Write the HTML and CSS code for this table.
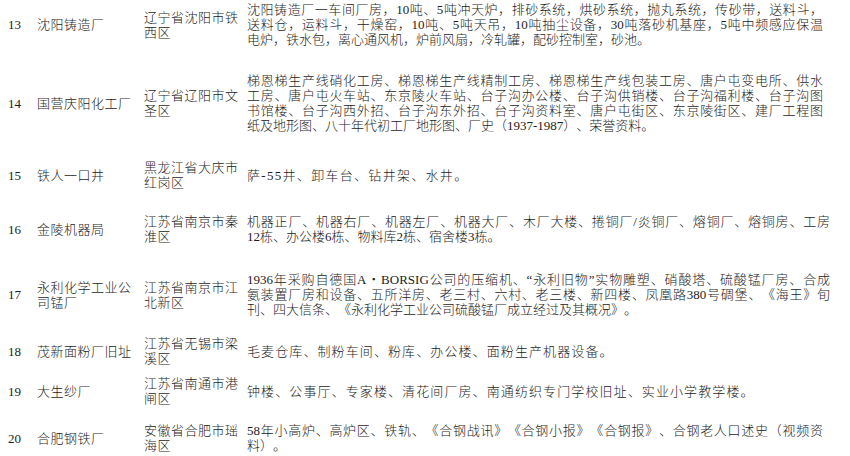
FILE: index.html
```html
<!DOCTYPE html>
<html lang="zh-CN">
<head>
<meta charset="utf-8">
<title>工业遗产名录</title>
<link rel="stylesheet" href="styles.css">
</head>
<body>
<div class="table">
  <div class="row r13">
    <div class="no">13</div>
    <div class="name">沈阳铸造厂</div>
    <div class="loc">辽宁省沈阳市铁西区</div>
    <div class="desc">
      <span class="ln">沈阳铸造厂一车间厂房，10吨、5吨冲天炉，排砂系统，烘砂系统，抛丸系统，传砂带，送料斗，</span>
      <span class="ln">送料仓，运料斗，干燥窑，10吨、5吨天吊，10吨抽尘设备，30吨落砂机基座，5吨中频感应保温</span>
      <span class="ln last">电炉，铁水包，离心通风机，炉前风扇，冷轧罐，配砂控制室，砂池。</span>
    </div>
  </div>
  <div class="row r14">
    <div class="no">14</div>
    <div class="name">国营庆阳化工厂</div>
    <div class="loc">辽宁省辽阳市文圣区</div>
    <div class="desc">
      <span class="ln">梯恩梯生产线硝化工房、梯恩梯生产线精制工房、梯恩梯生产线包装工房、唐户屯变电所、供水</span>
      <span class="ln">工房、唐户屯火车站、东京陵火车站、台子沟办公楼、台子沟供销楼、台子沟福利楼、台子沟图</span>
      <span class="ln">书馆楼、台子沟西外招、台子沟东外招、台子沟资料室、唐户屯街区、东京陵街区、建厂工程图</span>
      <span class="ln last">纸及地形图、八十年代初工厂地形图、厂史（1937-1987）、荣誉资料。</span>
    </div>
  </div>
  <div class="row r15">
    <div class="no">15</div>
    <div class="name">铁人一口井</div>
    <div class="loc">黑龙江省大庆市红岗区</div>
    <div class="desc sp-wide">
      <span class="ln last">萨-55井、卸车台、钻井架、水井。</span>
    </div>
  </div>
  <div class="row r16">
    <div class="no">16</div>
    <div class="name">金陵机器局</div>
    <div class="loc">江苏省南京市秦淮区</div>
    <div class="desc">
      <span class="ln">机器正厂、机器右厂、机器左厂、机器大厂、木厂大楼、捲铜厂/炎铜厂、熔铜厂、熔铜房、工房</span>
      <span class="ln last">12栋、办公楼6栋、物料库2栋、宿舍楼3栋。</span>
    </div>
  </div>
  <div class="row r17">
    <div class="no">17</div>
    <div class="name">永利化学工业公司锰厂</div>
    <div class="loc">江苏省南京市江北新区</div>
    <div class="desc">
      <span class="ln">1936年采购自德国A・BORSIG公司的压缩机、“永利旧物”实物雕塑、硝酸塔、硫酸锰厂房、合成</span>
      <span class="ln">氨装置厂房和设备、五所洋房、老三村、六村、老三楼、新四楼、凤凰路380号碉堡、《海王》旬</span>
      <span class="ln last">刊、四大信条、《永利化学工业公司硫酸锰厂成立经过及其概况》。</span>
    </div>
  </div>
  <div class="row r18">
    <div class="no">18</div>
    <div class="name">茂新面粉厂旧址</div>
    <div class="loc">江苏省无锡市梁溪区</div>
    <div class="desc sp-mid">
      <span class="ln last">毛麦仓库、制粉车间、粉库、办公楼、面粉生产机器设备。</span>
    </div>
  </div>
  <div class="row r19">
    <div class="no">19</div>
    <div class="name">大生纱厂</div>
    <div class="loc">江苏省南通市港闸区</div>
    <div class="desc sp-mid">
      <span class="ln last">钟楼、公事厅、专家楼、清花间厂房、南通纺织专门学校旧址、实业小学教学楼。</span>
    </div>
  </div>
  <div class="row r20">
    <div class="no">20</div>
    <div class="name">合肥钢铁厂</div>
    <div class="loc">安徽省合肥市瑶海区</div>
    <div class="desc">
      <span class="ln">58年小高炉、高炉区、铁轨、《合钢战讯》《合钢小报》《合钢报》、合钢老人口述史（视频资</span>
      <span class="ln last">料）。</span>
    </div>
  </div>
</div>
</body>
</html>
```

FILE: styles.css
```css
html, body {
  margin: 0;
  padding: 0;
  background: #ffffff;
}

body {
  font-family: "Liberation Serif", "Noto Sans CJK SC", serif;
  font-size: 13px;
  line-height: 15px;
  color: #1c1c1c;
  font-weight: 300;
  text-spacing-trim: space-all;
}

.table {
  display: flex;
  flex-direction: column;
  padding: 2px 0 0 8px;
}

.row {
  display: grid;
  grid-template-columns: 29px 107px 103px auto;
  align-items: center;
}

.no {
  letter-spacing: 0;
}

.name,
.loc {
  letter-spacing: 0.5px;
  width: 100px;
}

.desc {
  width: 576px;
}

.r16 .desc,
.r17 .desc {
  width: 583px;
}

.ln {
  display: block;
  text-align: justify;
  text-align-last: justify;
}

.ln.last {
  text-align: left;
  text-align-last: left;
}

.sp-mid .ln {
  letter-spacing: 1.1px;
}

.sp-wide .ln {
  letter-spacing: 1.3px;
}

.r13 { margin-bottom: 26px; }
.r14 { margin-bottom: 27px; }
.r15 { margin-bottom: 24px; }
.r16 { margin-bottom: 28px; }
.r17 { margin-bottom: 19px; }
.r18 { margin-bottom: 10px; }
.r19 { margin-bottom: 17px; }
```
